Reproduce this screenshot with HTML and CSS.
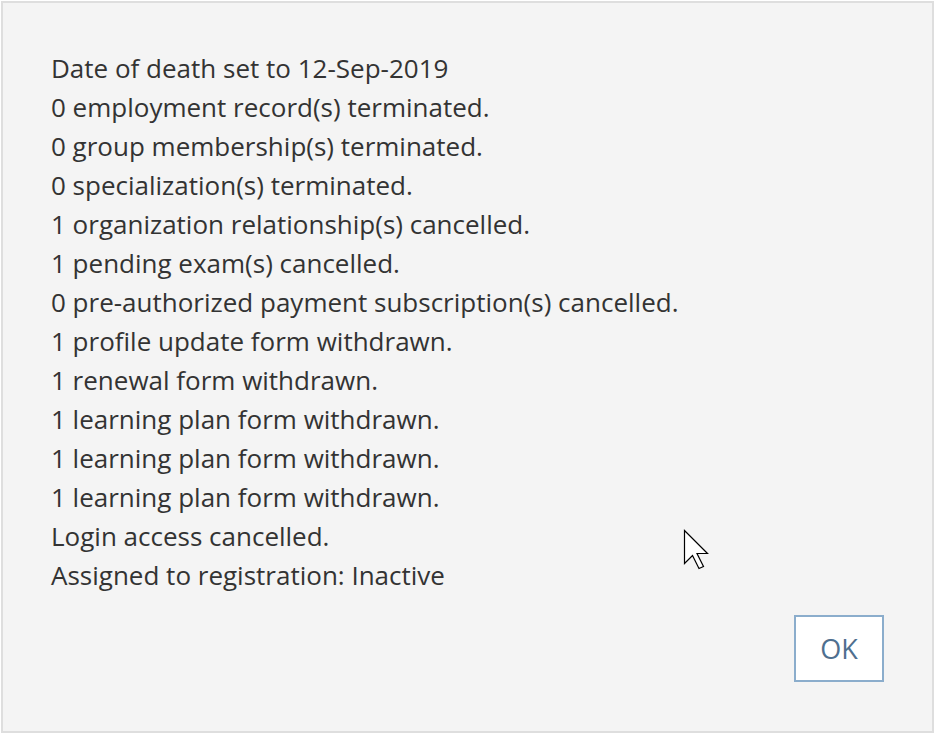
FILE: index.html
```html
<!DOCTYPE html>
<html>
<head>
<meta charset="utf-8">
<link rel="stylesheet" href="styles.css">
</head>
<body>
<div class="dialog">
  <div class="messages">
    <div>Date of death set to 12-Sep-2019</div>
    <div>0 employment record(s) terminated.</div>
    <div>0 group membership(s) terminated.</div>
    <div>0 specialization(s) terminated.</div>
    <div>1 organization relationship(s) cancelled.</div>
    <div>1 pending exam(s) cancelled.</div>
    <div>0 pre-authorized payment subscription(s) cancelled.</div>
    <div>1 profile update form withdrawn.</div>
    <div>1 renewal form withdrawn.</div>
    <div>1 learning plan form withdrawn.</div>
    <div>1 learning plan form withdrawn.</div>
    <div>1 learning plan form withdrawn.</div>
    <div>Login access cancelled.</div>
    <div>Assigned to registration: Inactive</div>
  </div>
  <div class="actions">
    <button class="ok">OK</button>
  </div>
  <svg class="cursor" width="28" height="42" viewBox="0 0 28 42">
    <path d="M1.5 1.5 L1.5 34.5 L9.5 26.5 L16 39.5 L20.5 37.5 L14 24.5 L24.5 24.5 Z" fill="#fff" stroke="#000" stroke-width="1.2" stroke-linejoin="miter"/>
  </svg>
</div>
</body>
</html>
```
FILE: styles.css
```css
html, body {
  margin: 0;
  padding: 0;
  background: #ffffff;
}
.dialog {
  position: relative;
  box-sizing: border-box;
  margin: 1px 0 0 1px;
  width: 933px;
  height: 732px;
  border: 2px solid #dedede;
  background: #f4f4f4;
  padding: 46px 0 0 48px;
  font-family: "Open Sans", sans-serif;
  color: #333333;
}
.messages {
  font-size: 26px;
  line-height: 39px;
}
.actions {
  display: flex;
  justify-content: flex-end;
  padding: 20px 48px 0 0;
}
.ok {
  width: 90px;
  height: 67px;
  background: #ffffff;
  border: 2px solid #8badcc;
  color: #4f6f8f;
  font-family: "Open Sans", sans-serif;
  font-size: 27px;
  padding: 0;
}
.cursor {
  position: absolute;
  left: 680px;
  top: 526px;
}
```
